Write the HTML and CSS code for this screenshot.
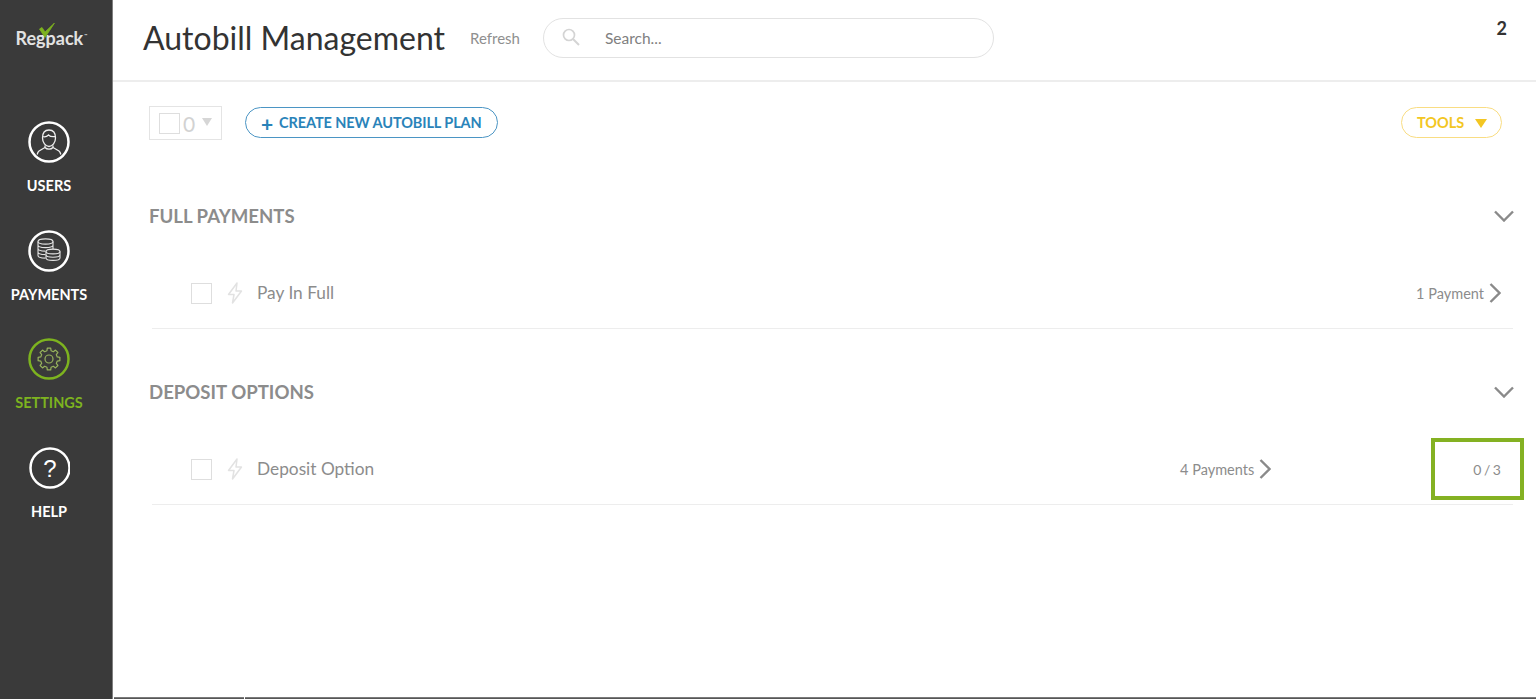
FILE: index.html
```html
<!DOCTYPE html>
<html lang="en">
<head>
<meta charset="utf-8">
<title>Autobill Management</title>
<link rel="stylesheet" href="styles.css">
</head>
<body>
<div class="app">
  <aside class="sidebar">
    <div class="logo">
      <span class="logo-text">Regpack</span><span class="logo-tm">™</span>
      <svg class="logo-check" viewBox="0 0 16 15" width="16" height="15"><path d="M0.500 6 L3 4.500 L6 9 L15.500 0 L6 14.500 Z" fill="#7db31f" stroke="#7db31f" stroke-width="0.800" stroke-linejoin="round"/></svg>
    </div>
    <nav class="nav">
      <a class="nav-item">
        <svg class="nav-icon" viewBox="0 0 42 42" width="42" height="42"><circle cx="21" cy="21" r="19.500" fill="none" stroke="#fff" stroke-width="2.500"/><g fill="none" stroke="#f0f0f0" stroke-width="1.300"><path d="M14.500 17c0-5.500 3-8 6.500-8s6.500 2.500 6.500 8c0 4.500-3 8.500-6.500 8.500s-6.500-4-6.500-8.500z"/><path d="M14.500 15.500c3 1 4.500 0 6-1.500 1.500 1.500 4 2 7 1.500"/><path d="M17 24.500l0 2-6 3.500c-1 .8-1.500 2-1.800 3.500"/><path d="M25 24.500l0 2 6 3.500c1 .8 1.500 2 1.800 3.500"/><path d="M17 26.500c2 2.200 6 2.200 8 0"/></g></svg>
        <span>USERS</span>
      </a>
      <a class="nav-item">
        <svg class="nav-icon" viewBox="0 0 42 42" width="42" height="42"><circle cx="21" cy="21" r="19.500" fill="none" stroke="#fff" stroke-width="2.500"/><g fill="none" stroke="#e4e4e4" stroke-width="1.100"><ellipse cx="17.500" cy="11.500" rx="7.500" ry="2.600"/><path d="M10 11.500v14c0 1.400 3 2.600 7.500 2.600M25 11.500v8M10 15c0 1.400 3 2.600 7.500 2.600s7.500-1.200 7.500-2.600M10 18.500c0 1.400 3 2.600 7.500 2.600M10 22c0 1.400 3 2.600 7.500 2.600"/><ellipse cx="25" cy="21.500" rx="7" ry="2.400"/><path d="M18 21.500v6.500c0 1.400 3 2.400 7 2.400s7-1 7-2.400v-6.500M18 24.800c0 1.400 3 2.400 7 2.400s7-1 7-2.400"/></g></svg>
        <span>PAYMENTS</span>
      </a>
      <a class="nav-item nav-item-active">
        <svg class="nav-icon" viewBox="0 0 42 42" width="42" height="42"><circle cx="21" cy="21" r="19.500" fill="none" stroke="#7db31f" stroke-width="2.500"/><g fill="none" stroke="#97b35c" stroke-width="1.200" stroke-linejoin="round"><circle cx="21" cy="21" r="4"/><path d="M18.940 12.750L19.280 10.130 22.720 10.130 23.060 12.750 25.380 13.710 27.470 12.100 29.900 14.530 28.290 16.620 29.250 18.940 31.870 19.280 31.870 22.720 29.250 23.060 28.290 25.380 29.900 27.470 27.470 29.900 25.380 28.290 23.060 29.250 22.720 31.870 19.280 31.870 18.940 29.250 16.620 28.290 14.530 29.900 12.100 27.470 13.710 25.380 12.750 23.060 10.130 22.720 10.130 19.280 12.750 18.940 13.710 16.620 12.100 14.530 14.530 12.100 16.620 13.710z"/></g></svg>
        <span>SETTINGS</span>
      </a>
      <a class="nav-item">
        <svg class="nav-icon" viewBox="-1 0 42 42" width="42" height="42"><circle cx="21" cy="21" r="19.500" fill="none" stroke="#fff" stroke-width="2.500"/><text x="21" y="29.500" text-anchor="middle" class="help-mark">?</text></svg>
        <span>HELP</span>
      </a>
    </nav>
  </aside>
  <main class="main">
    <header class="topbar">
      <h1 class="title">Autobill Management</h1>
      <a class="refresh">Refresh</a>
      <div class="search">
        <svg class="search-icon" viewBox="0 0 18 18" width="18" height="18"><circle cx="7" cy="7" r="5.500" fill="none" stroke="#d4d4d4" stroke-width="1.700"/><path d="M11 11l6 6" stroke="#d4d4d4" stroke-width="2"/></svg>
        <span class="search-text">Search...</span>
      </div>
      <span class="top-count">2</span>
    </header>
    <div class="content">
      <div class="toolbar">
        <div class="select-box">
          <span class="check check-small"></span>
          <span class="select-num">0</span>
          <span class="caret caret-grey"></span>
        </div>
        <a class="btn-create"><span class="plus">+</span>CREATE NEW AUTOBILL PLAN</a>
        <a class="btn-tools">TOOLS<span class="caret caret-yellow"></span></a>
      </div>
      <section class="group">
        <div class="group-head">
          <h2>FULL PAYMENTS</h2>
          <svg viewBox="0 0 20 12" width="20" height="12"><path d="M1 1.500l9 9 9-9" fill="none" stroke="#8a8a8a" stroke-width="2.400"/></svg>
        </div>
        <div class="row">
          <span class="check"></span>
          <svg class="bolt" viewBox="0 0 16 22" width="16" height="22"><path d="M10 1L1.500 12.500H7L5.500 21 14.500 9H9z" fill="none" stroke="#e2e2e2" stroke-width="1.500" stroke-linejoin="round"/></svg>
          <span class="row-name">Pay In Full</span>
          <span class="row-meta">1 Payment</span>
          <svg class="chev" viewBox="0 0 12 20" width="12" height="20"><path d="M1.500 1l9 9-9 9" fill="none" stroke="#8a8a8a" stroke-width="2.400"/></svg>
        </div>
      </section>
      <section class="group group-second">
        <div class="group-head">
          <h2>DEPOSIT OPTIONS</h2>
          <svg viewBox="0 0 20 12" width="20" height="12"><path d="M1 1.500l9 9 9-9" fill="none" stroke="#8a8a8a" stroke-width="2.400"/></svg>
        </div>
        <div class="row">
          <span class="check"></span>
          <svg class="bolt" viewBox="0 0 16 22" width="16" height="22"><path d="M10 1L1.500 12.500H7L5.500 21 14.500 9H9z" fill="none" stroke="#e2e2e2" stroke-width="1.500" stroke-linejoin="round"/></svg>
          <span class="row-name">Deposit Option</span>
          <span class="row-meta">4 Payments</span>
          <svg class="chev" viewBox="0 0 12 20" width="12" height="20"><path d="M1.500 1l9 9-9 9" fill="none" stroke="#8a8a8a" stroke-width="2.400"/></svg>
          <span class="row-count">0 / 3</span>
        </div>
      </section>
    </div>
    <div class="highlight"></div>
    <div class="bottom-bar"><span class="bottom-seg bottom-seg-short"></span><span class="bottom-seg"></span></div>
  </main>
</div>
</body>
</html>
```

FILE: styles.css
```css
* { box-sizing: border-box; }
html, body { margin: 0; height: 100%; overflow: hidden; }
body { font-family: Lato, "Open Sans", sans-serif; background: #fff; color: #333; }
h1, h2 { margin: 0; font-weight: 400; }

.app { display: flex; height: 699px; }

.sidebar {
  width: 113px;
  flex: none;
  background: #3a3a3a;
  border-right: 1px solid #808080;
  color: #fff;
}
.logo { position: relative; height: 121px; padding: 29px 0 0 16px; font-size: 18px; line-height: 18px; font-weight: 700; color: #e2e2e2; display: flex; }
.logo-text { margin-left: -0.500px; }
.logo-tm { font-size: 4px; line-height: 14px; margin-left: 1px; }
.logo-check { position: absolute; left: 39px; top: 23px; }

.nav { display: flex; flex-direction: column; gap: 19.670px; }
.nav-item { display: flex; flex-direction: column; align-items: center; gap: 14px; font-size: 14.500px; line-height: 18px; font-weight: 700; color: #fff; height: 89px; width: 98px; }
.nav-item-active { color: #7db31f; }
.nav-icon { display: block; flex: none; }
.help-mark { font-family: "Liberation Sans", sans-serif; font-size: 24px; font-weight: 400; fill: #fff; }

.main { flex: 1; display: flex; flex-direction: column; position: relative; min-width: 0; }

.topbar { height: 82px; flex: none; border-bottom: 2px solid #ededed; display: flex; align-items: center; padding: 0 29px 4px 30px; position: relative; }
.title { font-size: 32px; line-height: 40px; color: #333; width: 302px; white-space: nowrap; }
.refresh { font-size: 15px; color: #8f8f8f; margin-left: 25px; width: 49px; white-space: nowrap; }
.search { margin-left: 24px; width: 451px; height: 40px; border: 1px solid #e2e2e2; border-radius: 20px; display: flex; align-items: center; padding-left: 18px; }
.search-icon { flex: none; margin-top: -3px; }
.search-text { margin-left: 25px; font-size: 15.500px; color: #808080; }
.top-count { position: absolute; right: 29px; top: 17px; font-size: 18px; font-weight: 700; color: #333; line-height: 22px; }

.content { padding: 24px 23px 0 36px; flex: 1; }

.toolbar { display: flex; align-items: flex-start; height: 34px; }
.select-box { width: 73px; height: 34px; border: 1px solid #e4e4e4; display: flex; align-items: center; padding-left: 9px; }
.check { display: block; width: 21px; height: 21px; border: 1px solid #dedede; flex: none; }
.select-num { font-size: 21px; color: #d2d2d2; margin-left: 3px; }
.caret { display: block; width: 0; height: 0; }
.caret-grey { border-left: 5px solid transparent; border-right: 5px solid transparent; border-top: 8px solid #d6d6d6; margin-left: 7px; margin-top: -2px; }
.caret-yellow { border-left: 6px solid transparent; border-right: 6px solid transparent; border-top: 9px solid #f3c623; margin-left: 11px; margin-top: 2px; }
.btn-create { margin: 1px 0 0 23px; height: 31px; width: 253px; border: 1px solid #4b95c4; border-radius: 16px; color: #2a83b9; font-size: 14.500px; font-weight: 700; display: flex; align-items: center; padding-left: 15px; white-space: nowrap; letter-spacing: -.1px; }
.plus { font-size: 21px; line-height: 21px; margin-right: 6px; margin-top: 2px; }
.btn-tools { margin: 1px 11px 0 auto; height: 31px; width: 101px; border: 1px solid #f9dd83; border-radius: 16px; color: #f3c623; font-size: 14.500px; font-weight: 700; display: flex; align-items: center; padding-left: 15px; }

.group { padding-top: 61px; }
.group-second { padding-top: 48px; }
.group-head { display: flex; align-items: center; justify-content: space-between; height: 30px; }
.group-head svg { margin-right: -1px; }
.group-head h2 { font-size: 18.600px; line-height: 24px; font-weight: 700; color: #8c8c8c; }
.row { margin: 31px 0 0 3px; height: 67px; padding: 0 12px 4px 39px; border-bottom: 1px solid #ededed; display: flex; align-items: center; position: relative; }
.bolt { margin-left: 15px; flex: none; }
.row-name { margin-left: 14px; font-size: 17.300px; color: #8c8c8c; flex: 1; margin-top: -1px; }
.row-meta { font-size: 14.500px; color: #8c8c8c; }
.chev { margin-left: 5px; flex: none; }
.row-count { font-size: 14px; color: #8c8c8c; margin-left: 202px; word-spacing: -1px; }

.highlight { position: absolute; left: 1318px; top: 438px; width: 93px; height: 62px; border: 4px solid #84b122; }
.bottom-bar { position: absolute; left: 1px; right: 0; bottom: 0; height: 2px; display: flex; gap: 1px; }
.bottom-seg { flex: 1; background: linear-gradient(#8c8c8c, #444); }
.bottom-seg-short { flex: none; width: 130px; }
```
